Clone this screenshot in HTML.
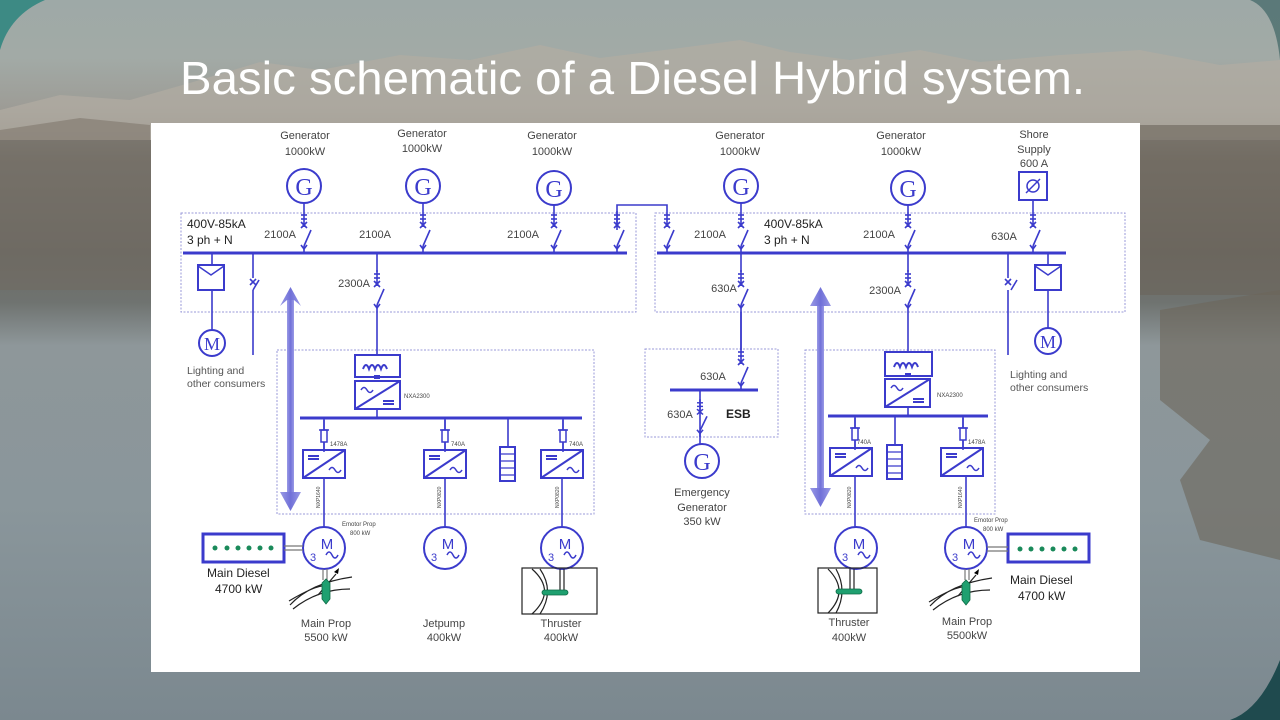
<!DOCTYPE html>
<html><head><meta charset="utf-8"><style>
html,body{margin:0;padding:0;width:1280px;height:720px;overflow:hidden;background:#8a9598}
svg{display:block}
</style></head><body>
<svg width="1280" height="720" viewBox="0 0 1280 720" xmlns="http://www.w3.org/2000/svg">
<defs>
<linearGradient id="bg" x1="0" y1="0" x2="0" y2="1">
<stop offset="0" stop-color="#9ea9a7"/>
<stop offset="0.08" stop-color="#a2aaa6"/>
<stop offset="0.15" stop-color="#9d9c96"/>
<stop offset="0.22" stop-color="#7f7a72"/>
<stop offset="0.35" stop-color="#6d6a64"/>
<stop offset="0.42" stop-color="#6f7370"/>
<stop offset="0.48" stop-color="#8e979a"/>
<stop offset="0.7" stop-color="#8a969b"/>
<stop offset="1" stop-color="#7b888f"/>
</linearGradient>
<linearGradient id="arr" x1="0" y1="0" x2="1" y2="0">
<stop offset="0" stop-color="#9a9ae6"/><stop offset="0.5" stop-color="#7070d8"/><stop offset="1" stop-color="#9a9ae6"/>
</linearGradient>
<g id="brk" stroke="#3b3bcc" stroke-width="1.6" fill="none">
<line x1="0" y1="-42" x2="0" y2="-26"/>
<line x1="-3" y1="-38" x2="3" y2="-38"/>
<line x1="-3" y1="-34" x2="3" y2="-34"/>
<line x1="-3" y1="-31" x2="3" y2="-25"/><line x1="3" y1="-31" x2="-3" y2="-25"/>
<line x1="0" y1="-7" x2="7" y2="-23"/>
<line x1="0" y1="-7" x2="0" y2="0"/>
<polyline points="-3,-8 0,-4 3,-8"/>
</g>
<g id="conv" stroke="#3b3bcc" stroke-width="2" fill="none">
<rect x="0" y="0" width="42" height="28"/>
<line x1="0" y1="28" x2="42" y2="0"/>
<line x1="5" y1="6" x2="16" y2="6"/><line x1="5" y1="9" x2="16" y2="9"/>
<path d="M26 20 q3 -5 6 0 q3 5 6 0" stroke-width="1.5"/>
</g>
<g id="conv2" stroke="#3b3bcc" stroke-width="2" fill="none">
<rect x="0" y="0" width="45" height="28"/>
<line x1="0" y1="28" x2="45" y2="0"/>
<path d="M6 9 q3 -5 6 0 q3 5 6 0" stroke-width="1.5"/>
<line x1="28" y1="20" x2="39" y2="20"/><line x1="28" y1="23" x2="39" y2="23"/>
</g>
<g id="mot" stroke="#3b3bcc" stroke-width="2" fill="#fff">
<circle cx="0" cy="0" r="21"/>
<path d="M2 7 q3 -6 6 0 q3 6 6 0" fill="none" stroke-width="1.5"/>
</g>
<g id="fuse" stroke="#3b3bcc" stroke-width="1.5" fill="none">
<line x1="0" y1="0" x2="0" y2="32"/>
<rect x="-3" y="10" width="6" height="12" fill="#fff"/>
<line x1="-5" y1="10" x2="5" y2="10"/>
</g>
</defs>
<rect width="1280" height="720" fill="url(#bg)"/>
<path d="M0 110 L60 95 L130 100 L200 80 L260 62 L320 70 L400 55 L470 60 L540 45 L600 58 L680 48 L740 40 L790 52 L850 60 L920 50 L980 62 L1060 55 L1140 50 L1220 65 L1280 60 L1280 140 L0 140Z" fill="#b2aca2" opacity="0.7"/>
<path d="M0 130 L80 118 L150 125 L150 140 L0 140Z" fill="#8a8278" opacity="0.8"/>
<rect x="0" y="140" width="151" height="150" fill="#6f6a62" opacity="0.6"/>
<rect x="1140" y="125" width="140" height="170" fill="#6b645a" opacity="0.6"/>
<path d="M1160 310 L1280 290 L1280 560 L1200 540 L1180 480 L1210 440 L1160 400Z" fill="#6c655a" opacity="0.6"/>
<path d="M0 0 L45 0 Q10 15 0 50Z" fill="#3d8a84"/>
<path d="M1280 660 Q1260 710 1230 720 L1280 720Z" fill="#1f4a4e"/>
<path d="M1250 0 Q1275 10 1280 60 L1280 0Z" fill="#2e5a5a" opacity="0.6"/>
<text x="180" y="94" font-family="Liberation Sans, sans-serif" font-size="46" fill="#fff" textLength="905" lengthAdjust="spacingAndGlyphs">Basic schematic of a Diesel Hybrid system.</text>
<rect x="151" y="123" width="989" height="549" fill="#fff"/>
<g font-family="Liberation Sans, sans-serif" font-size="11" fill="#444" text-anchor="middle">
<text x="305" y="139">Generator</text><text x="305" y="155">1000kW</text>
<text x="422" y="137">Generator</text><text x="422" y="152">1000kW</text>
<text x="552" y="139">Generator</text><text x="552" y="155">1000kW</text>
<text x="740" y="139">Generator</text><text x="740" y="155">1000kW</text>
<text x="901" y="139">Generator</text><text x="901" y="155">1000kW</text>
<text x="1034" y="138">Shore</text><text x="1034" y="153">Supply</text><text x="1034" y="167">600 A</text>
<text x="375" y="238">2100A</text><text x="280" y="238">2100A</text><text x="523" y="238">2100A</text>
<text x="710" y="238">2100A</text><text x="879" y="238">2100A</text><text x="1004" y="240">630A</text>
<text x="354" y="287">2300A</text><text x="724" y="292">630A</text><text x="885" y="294">2300A</text>
<text x="713" y="380">630A</text><text x="680" y="418">630A</text>
<text x="702" y="496">Emergency</text><text x="702" y="511">Generator</text><text x="702" y="525">350 kW</text>
<text x="326" y="627">Main Prop</text><text x="326" y="641">5500 kW</text>
<text x="444" y="627">Jetpump</text><text x="444" y="641">400kW</text>
<text x="561" y="627">Thruster</text><text x="561" y="641">400kW</text>
<text x="849" y="626">Thruster</text><text x="849" y="641">400kW</text>
<text x="967" y="625">Main Prop</text><text x="967" y="639">5500kW</text>
</g>
<g font-family="Liberation Sans, sans-serif" font-size="12" fill="#222">
<text x="187" y="228">400V-85kA</text><text x="187" y="244">3 ph + N</text>
<text x="764" y="228">400V-85kA</text><text x="764" y="244">3 ph + N</text>
<text x="726" y="418" font-weight="bold">ESB</text>
<text x="207" y="577">Main Diesel</text><text x="215" y="593">4700 kW</text>
<text x="1010" y="584">Main Diesel</text><text x="1018" y="600">4700 kW</text>
</g>
<g font-family="Liberation Sans, sans-serif" font-size="10.5" fill="#555">
<text x="187" y="374">Lighting and</text><text x="187" y="387">other consumers</text>
<text x="1010" y="378">Lighting and</text><text x="1010" y="391">other consumers</text>
</g>
<g font-family="Liberation Sans, sans-serif" font-size="6" fill="#444">
<text x="404" y="398">NXA2300</text><text x="937" y="397">NXA2300</text>
<text x="330" y="446">1478A</text><text x="451" y="446">740A</text><text x="569" y="446">740A</text>
<text x="857" y="444">740A</text><text x="968" y="444">1478A</text>
<text x="342" y="526">Emotor Prop</text><text x="350" y="535">800 kW</text>
<text x="974" y="522">Emotor Prop</text><text x="983" y="531">800 kW</text>
</g>
<g stroke="#9a9ad8" stroke-width="1" stroke-dasharray="2,1.5" fill="none">
<rect x="181" y="213" width="455" height="99"/>
<rect x="655" y="213" width="470" height="99"/>
<rect x="277" y="350" width="317" height="164"/>
<rect x="645" y="349" width="133" height="88"/>
<rect x="805" y="350" width="190" height="164"/>
</g>
<g fill="url(#arr)">
<rect x="287" y="298" width="7" height="200"/>
<path d="M280 306 L290.5 287 L301 306 L294 300 L287 300Z"/>
<path d="M280 492 L290.5 511 L301 492Z"/>
<rect x="817" y="298" width="7" height="195"/>
<path d="M810 306 L820.5 287 L831 306Z"/>
<path d="M810 488 L820.5 507 L831 488Z"/>
</g>
<g stroke="#3b3bcc" fill="none">
<line x1="183" y1="253" x2="627" y2="253" stroke-width="3"/>
<line x1="657" y1="253" x2="1066" y2="253" stroke-width="3"/>
<line x1="300" y1="418" x2="582" y2="418" stroke-width="3"/>
<line x1="828" y1="416" x2="988" y2="416" stroke-width="3"/>
<line x1="670" y1="390" x2="758" y2="390" stroke-width="3"/>
<g stroke-width="1.6">
<line x1="304" y1="203" x2="304" y2="211"/><line x1="423" y1="203" x2="423" y2="211"/><line x1="554" y1="205" x2="554" y2="211"/>
<line x1="741" y1="203" x2="741" y2="211"/><line x1="908" y1="205" x2="908" y2="211"/><line x1="1033" y1="200" x2="1033" y2="211"/>
<polyline points="617,230 617,205 667,205 667,211"/>
<line x1="212" y1="253" x2="212" y2="265"/><line x1="212" y1="290" x2="212" y2="330"/>
<line x1="253" y1="253" x2="253" y2="278"/><line x1="253" y1="290" x2="259" y2="280"/><line x1="253" y1="290" x2="253" y2="355"/>
<line x1="250" y1="279" x2="256" y2="285"/><line x1="256" y1="279" x2="250" y2="285"/>
<line x1="377" y1="312" x2="377" y2="355"/>
<line x1="741" y1="312" x2="741" y2="348"/>
<line x1="908" y1="312" x2="908" y2="352"/>
<line x1="1048" y1="253" x2="1048" y2="265"/><line x1="1048" y1="290" x2="1048" y2="328"/>
<line x1="1008" y1="253" x2="1008" y2="278"/><line x1="1011" y1="290" x2="1017" y2="280"/><line x1="1008" y1="290" x2="1008" y2="355"/>
<line x1="1005" y1="279" x2="1011" y2="285"/><line x1="1011" y1="279" x2="1005" y2="285"/>
<line x1="700" y1="390" x2="700" y2="444"/>
<line x1="377" y1="410" x2="377" y2="418"/>
<line x1="324" y1="418" x2="324" y2="450"/><line x1="445" y1="418" x2="445" y2="450"/><line x1="563" y1="418" x2="563" y2="450"/>
<line x1="508" y1="418" x2="508" y2="447"/>
<line x1="324" y1="478" x2="324" y2="527"/><line x1="445" y1="478" x2="445" y2="527"/><line x1="562" y1="478" x2="562" y2="527"/>
<line x1="908" y1="408" x2="908" y2="416"/>
<line x1="855" y1="416" x2="855" y2="448"/><line x1="963" y1="416" x2="963" y2="448"/><line x1="895" y1="416" x2="895" y2="445"/>
<line x1="855" y1="476" x2="855" y2="527"/><line x1="966" y1="476" x2="966" y2="527"/>
</g>
</g>
<use href="#brk" x="304" y="253"/><use href="#brk" x="423" y="253"/><use href="#brk" x="554" y="253"/><use href="#brk" x="617" y="253"/>
<use href="#brk" x="667" y="253"/><use href="#brk" x="741" y="253"/><use href="#brk" x="908" y="253"/><use href="#brk" x="1033" y="253"/>
<g transform="translate(377,312)"><use href="#brk"/></g>
<g transform="translate(741,312)"><use href="#brk"/></g>
<g transform="translate(908,312)"><use href="#brk"/></g>
<g transform="translate(741,390)"><use href="#brk"/></g>
<g transform="translate(700,437)"><use href="#brk" transform="scale(1,0.9)"/></g>
<line x1="377" y1="253" x2="377" y2="272" stroke="#3b3bcc" stroke-width="1.6"/>
<line x1="741" y1="253" x2="741" y2="272" stroke="#3b3bcc" stroke-width="1.6"/>
<line x1="908" y1="253" x2="908" y2="272" stroke="#3b3bcc" stroke-width="1.6"/>
<line x1="741" y1="312" x2="741" y2="350" stroke="#3b3bcc" stroke-width="1.6"/>
<g stroke="#3b3bcc" stroke-width="2" fill="#fff">
<circle cx="304" cy="186" r="17"/><circle cx="423" cy="186" r="17"/><circle cx="554" cy="188" r="17"/>
<circle cx="741" cy="186" r="17"/><circle cx="908" cy="188" r="17"/><circle cx="702" cy="461" r="17"/>
<rect x="1019" y="172" width="28" height="28"/>
<circle cx="212" cy="343" r="13"/><circle cx="1048" cy="341" r="13"/>
<rect x="198" y="265" width="26" height="25"/><rect x="1035" y="265" width="26" height="25"/>
</g>
<g stroke="#3b3bcc" stroke-width="1.5" fill="none">
<polyline points="198,266 211,275 224,266"/><polyline points="1035,266 1048,275 1061,266"/>
<circle cx="1033" cy="186" r="6"/><line x1="1026" y1="193" x2="1040" y2="179"/>
</g>
<g font-family="Liberation Serif, serif" font-size="24" fill="#3b3bcc" text-anchor="middle">
<text x="304" y="195">G</text><text x="423" y="195">G</text><text x="554" y="197">G</text>
<text x="741" y="195">G</text><text x="908" y="197">G</text><text x="702" y="470">G</text>
<text x="212" y="350" font-size="18">M</text><text x="1048" y="348" font-size="18">M</text>
</g>
<g stroke="#3b3bcc" stroke-width="2" fill="none">
<rect x="355" y="355" width="45" height="22"/><path d="M363 369 q3 -8 6 0 q3 -8 6 0 q3 -8 6 0 q3 -8 6 0"/>
<rect x="885" y="352" width="47" height="24"/><path d="M894 367 q3 -8 6 0 q3 -8 6 0 q3 -8 6 0 q3 -8 6 0"/>
<rect x="500" y="447" width="15" height="34"/><rect x="887" y="445" width="15" height="34"/>
<path d="M500 454h15M500 461h15M500 468h15M500 475h15M887 452h15M887 459h15M887 466h15M887 473h15" stroke-width="1.3"/>
</g>
<rect x="374" y="375" width="6" height="4" fill="#3b3bcc"/><rect x="905" y="373" width="6" height="4" fill="#3b3bcc"/>
<use href="#conv2" x="355" y="381"/><use href="#conv2" x="885" y="379"/>
<use href="#conv" x="303" y="450"/><use href="#conv" x="424" y="450"/><use href="#conv" x="541" y="450"/>
<use href="#conv" x="830" y="448"/><use href="#conv" x="941" y="448"/>
<use href="#fuse" x="324" y="420"/><use href="#fuse" x="445" y="420"/><use href="#fuse" x="563" y="420"/>
<use href="#fuse" x="855" y="418"/><use href="#fuse" x="963" y="418"/>
<g font-family="Liberation Sans, sans-serif" font-size="5" fill="#444">
<text transform="translate(320,508) rotate(-90)">NXP1640</text><text transform="translate(441,508) rotate(-90)">NXP0820</text>
<text transform="translate(559,508) rotate(-90)">NXP0820</text><text transform="translate(851,508) rotate(-90)">NXP0820</text>
<text transform="translate(962,508) rotate(-90)">NXP1640</text>
</g>
<use href="#mot" x="324" y="548"/><use href="#mot" x="445" y="548"/><use href="#mot" x="562" y="548"/>
<use href="#mot" x="856" y="548"/><use href="#mot" x="966" y="548"/>
<g font-family="Liberation Sans, sans-serif" font-size="15" fill="#3b3bcc" text-anchor="middle">
<text x="327" y="549">M</text><text x="448" y="549">M</text><text x="565" y="549">M</text><text x="859" y="549">M</text><text x="969" y="549">M</text>
<text x="313" y="561" font-size="11">3</text><text x="434" y="561" font-size="11">3</text><text x="551" y="561" font-size="11">3</text><text x="845" y="561" font-size="11">3</text><text x="955" y="561" font-size="11">3</text>
</g>
<g stroke="#3b3bcc" stroke-width="3" fill="#fff">
<rect x="203" y="534" width="81" height="28"/><rect x="1008" y="534" width="81" height="28"/>
</g>
<g fill="#1a8a5a">
<circle cx="215" cy="548" r="2.5"/><circle cx="227" cy="548" r="2.5"/><circle cx="238" cy="548" r="2.5"/><circle cx="249" cy="548" r="2.5"/><circle cx="260" cy="548" r="2.5"/><circle cx="271" cy="548" r="2.5"/>
<circle cx="1020" cy="549" r="2.5"/><circle cx="1031" cy="549" r="2.5"/><circle cx="1042" cy="549" r="2.5"/><circle cx="1053" cy="549" r="2.5"/><circle cx="1064" cy="549" r="2.5"/><circle cx="1075" cy="549" r="2.5"/>
</g>
<g stroke="#777" stroke-width="1.2">
<line x1="284" y1="546" x2="303" y2="546"/><line x1="284" y1="550" x2="303" y2="550"/>
<line x1="987" y1="547" x2="1008" y2="547"/><line x1="987" y1="551" x2="1008" y2="551"/>
<line x1="323" y1="569" x2="323" y2="580"/><line x1="327" y1="569" x2="327" y2="580"/>
<line x1="965" y1="569" x2="965" y2="580"/><line x1="969" y1="569" x2="969" y2="580"/>
</g>
<g stroke="#222" stroke-width="1.2" fill="none">
<path d="M290 605 q20 -22 62 -28 M293 609 q25 -20 57 -20 M289 601 q30 -18 40 -15"/>
<path d="M930 606 q20 -22 62 -28 M933 610 q25 -20 57 -20 M929 602 q30 -18 40 -15"/>
<line x1="318" y1="595" x2="336" y2="574"/><line x1="958" y1="596" x2="976" y2="575"/>
<rect x="522" y="568" width="75" height="46"/><rect x="818" y="568" width="59" height="45"/>
<path d="M532 569 q25 22 0 45 M540 569 q15 22 0 45"/>
<path d="M828 569 q22 22 0 44 M836 569 q12 22 0 44"/>
<line x1="560" y1="569" x2="560" y2="590"/><line x1="564" y1="569" x2="564" y2="590"/>
<line x1="850" y1="569" x2="850" y2="589"/><line x1="854" y1="569" x2="854" y2="589"/>
</g>
<path d="M334 572 l5 -4 l-1 6z" fill="#000"/><path d="M974 573 l5 -4 l-1 6z" fill="#000"/>
<g fill="#1fa070" stroke="#0d6a45" stroke-width="0.8">
<path d="M322 583 l4 -4 l4 4 l0 16 l-4 5 l-4 -5z"/>
<path d="M962 584 l4 -4 l4 4 l0 16 l-4 5 l-4 -5z"/>
<rect x="542" y="590" width="26" height="5" rx="2.5"/>
<rect x="836" y="589" width="26" height="5" rx="2.5"/>
</g>
</svg>
</body></html>
